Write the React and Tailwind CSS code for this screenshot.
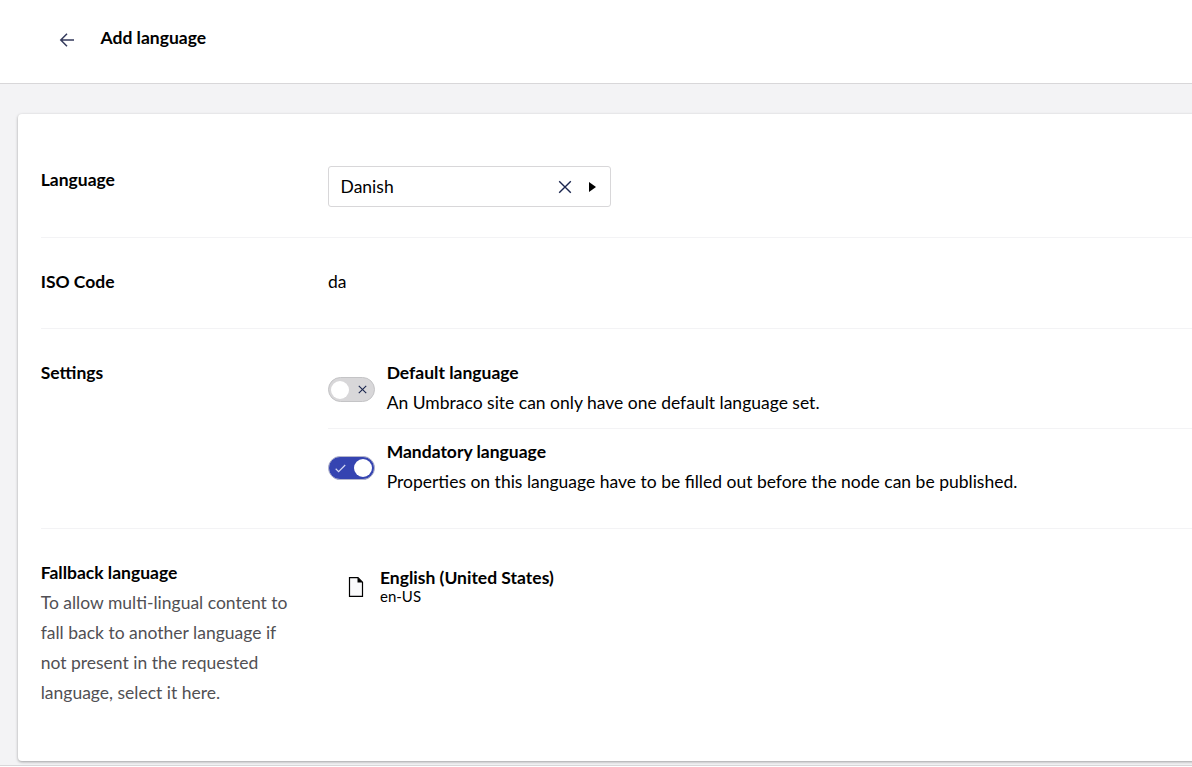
function BackArrow() {
  return (
    <svg className="h-4 w-4" viewBox="0 0 16 16" fill="none" stroke="#343a5c" strokeWidth="1.5">
      <path d="M15 8H1.8M8 1.8L1.8 8L8 14.2" />
    </svg>
  );
}

function Cross({ className, strokeWidth = 1.4 }) {
  return (
    <svg className={className} viewBox="0 0 14 14" fill="none" stroke="#1b264f" strokeWidth={strokeWidth}>
      <path d="M1.2 1.2L12.8 12.8M12.8 1.2L1.2 12.8" />
    </svg>
  );
}

function Toggle({ checked }) {
  if (checked) {
    return (
      <div className="flex h-6 w-[47px] items-center justify-between rounded-full border border-[#b4b6cc] bg-[#3544b1] pl-[6px] pr-[2px]">
        <svg className="h-[9px] w-[11px]" viewBox="0 0 11 9" fill="none" stroke="#d5d9f3" strokeWidth="1.2">
          <path d="M0.7 4.8L3.6 7.6L10.2 1" />
        </svg>
        <div className="h-[18px] w-[18px] rounded-full bg-white" />
      </div>
    );
  }
  return (
    <div className="flex h-[25px] w-[47px] items-center justify-between rounded-full border border-[#c4c4c6] bg-[#d8d7d9] pl-[2.5px] pr-[7px]">
      <div className="h-[18px] w-[18px] rounded-full bg-white" />
      <Cross className="h-[9px] w-[9px]" strokeWidth={1.7} />
    </div>
  );
}

function Row({ label, description, last, className = "", children }) {
  return (
    <div className={`flex pt-[29px] ${last ? "" : "border-b border-[#f3f3f5]"} ${className}`}>
      <div className="w-[287.3px] shrink-0">
        <div className="font-bold">{label}</div>
        {description && <p className="w-[260px] text-[#515054]">{description}</p>}
      </div>
      <div className="min-w-0 flex-1">{children}</div>
    </div>
  );
}

function Setting({ title, text, checked }) {
  return (
    <div className="flex gap-[11.7px]">
      <div className="pt-[19px]">
        <Toggle checked={checked} />
      </div>
      <div>
        <div className="font-bold">{title}</div>
        <div>{text}</div>
      </div>
    </div>
  );
}

export default function App() {
  return (
    <div className="flex h-[767px] w-full flex-col overflow-hidden bg-[#f3f3f5] font-['Lato',sans-serif] text-[17.5px] leading-[30px] text-black">
      <header className="flex h-[84px] shrink-0 items-center border-b border-[#d8d7d9] bg-white pb-[7px] pl-[59px]">
        <div className="pt-[3px]">
          <BackArrow />
        </div>
        <h1 className="ml-[25.5px] font-bold">Add language</h1>
      </header>
      <main className="h-[682px] shrink-0 border-b border-[#d8d7d9] pl-[18px] pt-[30px]">
        <section className="-mr-1 h-[647px] rounded-[4px] bg-white pl-[22.7px] pt-[22px] shadow-[0_1px_3px_rgba(0,0,0,0.35)]">
          <Row label="Language" className="h-[102px]">
            <div className="mt-px flex h-[41px] w-[283px] items-center rounded-[3px] border border-[#d8d7d9] pl-[11.6px] pr-[14px]">
              <span className="flex-1">Danish</span>
              <Cross className="h-[14px] w-[14px]" />
              <svg className="ml-[17px] h-[10px] w-[7px]" viewBox="0 0 7 10">
                <path d="M0 0L7 5L0 10Z" fill="#000" />
              </svg>
            </div>
          </Row>
          <Row label="ISO Code" className="h-[91px]">da</Row>
          <Row label="Settings" className="h-[200px]">
            <div className="h-[71px] border-b border-[#f3f3f5]">
              <Setting title="Default language" text="An Umbraco site can only have one default language set." />
            </div>
            <div className="pt-2">
              <Setting checked title="Mandatory language" text="Properties on this language have to be filled out before the node can be published." />
            </div>
          </Row>
          <Row
            last
            label="Fallback language"
            description="To allow multi-lingual content to fall back to another language if not present in the requested language, select it here."
          >
            <div className="flex gap-4 pl-5 pt-[10px]">
              <svg className="mt-[9px] h-5 w-4" viewBox="0 0 16 20">
                <path d="M1.5 0.7H10L14.5 5.2V19.3H1.5Z" fill="#fafafb" stroke="#000" strokeWidth="1.2" />
                <path d="M9.5 0.5V5.5H15Z" fill="#000" />
              </svg>
              <div className="leading-[20px]">
                <div className="font-bold">English (United States)</div>
                <div className="text-[15px] leading-[17px]">en-US</div>
              </div>
            </div>
          </Row>
        </section>
      </main>
      <div className="h-px bg-white" />
    </div>
  );
}
